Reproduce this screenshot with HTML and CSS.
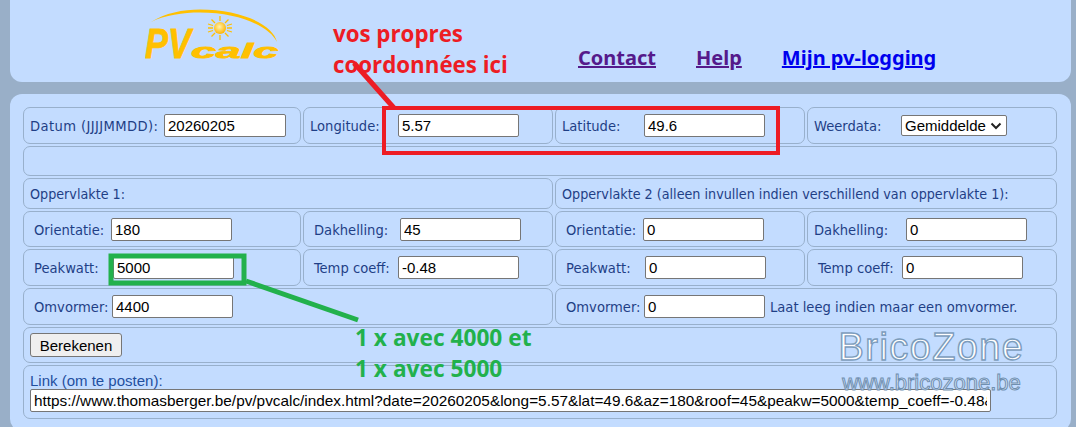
FILE: index.html
```html
<!DOCTYPE html>
<html lang="nl">

<head>
    <meta charset="UTF-8">
    <title>PVcalc</title>
    <link rel="stylesheet" href="styles.css">
</head>

<body>
    <header class="top-panel">
        <svg class="logo" width="140" height="60" viewBox="0 0 140 60">
            <defs>
                <radialGradient id="sun-fill" cx="0.45" cy="0.4" r="0.6">
                    <stop offset="0" stop-color="#fff3b0" />
                    <stop offset="1" stop-color="#ffb400" />
                </radialGradient>
            </defs>
            <path d="M6 13 C20 4 38 0.5 55 0.5 C95 0.5 128 15 132 33 C125 18 95 3.5 55 3.5 C38 3.5 20 6 6 13 Z" fill="#ffc000" />
            <g stroke="#ffc000" stroke-width="1.3">
                <path d="M75 7 L75 12 M75 26 L75 31 M63 19 L68 19 M82 19 L87 19" />
                <path d="M66.5 10.5 L70 14 M80 24 L83.5 27.5 M66.5 27.5 L70 24 M80 14 L83.5 10.5" />
                <path d="M63 15 L68 16.5 M82 21.5 L87 23 M63 23 L68 21.5 M82 16.5 L87 15" />
            </g>
            <circle cx="75" cy="19" r="6" fill="url(#sun-fill)" />
            <text class="logo-text" x="0" y="49"><tspan class="logo-pv" textLength="46" lengthAdjust="spacingAndGlyphs">PV</tspan><tspan class="logo-calc" textLength="87" lengthAdjust="spacingAndGlyphs">calc</tspan></text>
        </svg>
        <nav class="top-links">
            <a class="visited" href="#">Contact</a>
            <a class="visited" href="#">Help</a>
            <a href="#">Mijn pv-logging</a>
        </nav>
    </header>

    <main class="main-panel">
        <form class="calc-grid">
            <div class="cell first"><label class="w134 date-label">Datum (JJJJMMDD):</label><input class="field wide" value="20260205"></div>
            <div class="cell"><label class="w88">Longitude:</label><input class="field" value="5.57"></div>
            <div class="cell"><label class="w82">Latitude:</label><input class="field" value="49.6"></div>
            <div class="cell">
                <label class="w87">Weerdata:</label>
                <select class="weather">
                    <option>Gemiddelde</option>
                </select>
            </div>

            <div class="cell span-4"></div>

            <div class="cell first span-2 heading">Oppervlakte 1:</div>
            <div class="cell span-2 heading">Oppervlakte 2 (alleen invullen indien verschillend van oppervlakte 1):</div>

            <div class="cell inner"><label class="w77">Orientatie:</label><input class="field" value="180"></div>
            <div class="cell inner"><label class="w86">Dakhelling:</label><input class="field" value="45"></div>
            <div class="cell inner"><label class="w77">Orientatie:</label><input class="field" value="0"></div>
            <div class="cell"><label class="w92">Dakhelling:</label><input class="field" value="0"></div>

            <div class="cell inner"><label class="w79">Peakwatt:</label><input class="field" value="5000"></div>
            <div class="cell inner"><label class="w84">Temp coeff:</label><input class="field" value="-0.48"></div>
            <div class="cell inner"><label class="w79">Peakwatt:</label><input class="field" value="0"></div>
            <div class="cell inner"><label class="w84">Temp coeff:</label><input class="field" value="0"></div>

            <div class="cell inner span-2"><label class="w78">Omvormer:</label><input class="field" value="4400"></div>
            <div class="cell inner span-2">
                <label class="w78">Omvormer:</label><input class="field" value="0">
                <span class="hint">Laat leeg indien maar een omvormer.</span>
            </div>

            <div class="cell first span-4"><button class="calc-button" type="button">Berekenen</button></div>

            <div class="cell first span-4 link-cell">
                <label class="link-label">Link (om te posten):</label>
                <input class="field link-field" value="https://www.thomasberger.be/pv/pvcalc/index.html?date=20260205&amp;long=5.57&amp;lat=49.6&amp;az=180&amp;roof=45&amp;peakw=5000&amp;temp_coeff=-0.48&amp;inverter=4400">
            </div>
        </form>
    </main>

    <!-- annotations drawn on top of the screenshot -->
    <svg class="marks" width="1076" height="427" viewBox="0 0 1076 427">
        <g fill="none" stroke="#ed1c24" stroke-width="4">
            <rect x="384" y="108" width="394" height="45" />
            <path d="M354 63 L394 108" stroke-width="5" />
        </g>
        <g fill="none" stroke="#22b14c" stroke-width="5">
            <rect x="111" y="256" width="133" height="27" />
            <path d="M246 281 L358 320" />
        </g>
    </svg>
    <p class="note note-red">vos propres<br>coordonnées ici</p>
    <p class="note note-green">1 x avec 4000 et<br>1 x avec 5000</p>
    <div class="watermark">
        <div class="wm-name">BricoZone</div>
        <div class="wm-url">www.bricozone.be</div>
    </div>
</body>

</html>
```

FILE: styles.css
```css
html {
    height: 100%;
}

body {
    margin: 0;
    height: 427px;
    padding: 0 5px 0 10px;
    overflow: hidden;
    position: relative;
    box-sizing: border-box;
    background-color: #99afc8;
    color: #1f3f86;
    font-family: 'DejaVu Sans Condensed', 'DejaVu Sans', sans-serif;
    font-stretch: condensed;
    font-size: 14.6px;
}

.top-panel {
    height: 82px;
    display: flex;
    padding-left: 135px;
    box-sizing: border-box;
    background-color: #c3dcff;
    border-radius: 0 0 12px 12px;
}

.logo {
    margin-top: 9px;
    flex: none;
}

.logo-text {
    font-family: 'Liberation Sans', sans-serif;
    font-stretch: normal;
    font-weight: bold;
    font-style: italic;
    fill: #ffc000;
    stroke: #ffc000;
    stroke-width: 0.8px;
}

.logo-pv {
    font-size: 42px;
}

.logo-calc {
    font-size: 21px;
}

.top-links {
    display: flex;
    gap: 40px;
    margin-left: 293px;
    padding-top: 44px;
    font-family: 'Noto Sans', sans-serif;
    font-stretch: normal;
    font-size: 20px;
    font-weight: bold;
}

.top-links a {
    color: #0000ee;
}

.top-links a.visited {
    color: #551a8b;
}

.main-panel {
    margin-top: 12px;
    height: 337px;
    padding: 13px 0 0 13px;
    box-sizing: border-box;
    background-color: #c3dcff;
    border-radius: 12px;
}

.calc-grid {
    display: grid;
    grid-template-columns: 278px 250px 250px 250px;
    grid-template-rows: 37px 30px 31px 36px 37px 37px 36px 54px;
    gap: 2px;
}

.cell {
    display: flex;
    align-items: center;
    padding-left: 6px;
    border: 1px solid #98b0cc;
    border-radius: 7px;
    white-space: nowrap;
}

.cell.first {
    padding-left: 6px;
}

.cell.inner {
    padding-left: 10px;
}

.heading {
    font-size: 14.2px;
}

.date-label {
    letter-spacing: 0.4px;
}

.span-2 {
    grid-column: span 2;
}

.span-4 {
    grid-column: span 4;
}

.w77 { width: 77px; }
.w78 { width: 78px; }
.w79 { width: 79px; }
.w82 { width: 82px; }
.w84 { width: 84px; }
.w86 { width: 86px; }
.w87 { width: 87px; }
.w88 { width: 88px; }
.w92 { width: 92px; }
.w134 { width: 134px; }

.field {
    width: 121px;
    height: 23px;
    padding: 1px 3px;
    box-sizing: border-box;
    border: 1px solid #767676;
    border-radius: 2px;
    background-color: #fff;
    color: #000;
    font-family: 'Liberation Sans', sans-serif;
    font-size: 15px;
}

.field.wide {
    width: 122px;
}

.weather {
    appearance: none;
    width: 106px;
    height: 21px;
    padding: 0 0 0 3px;
    box-sizing: border-box;
    border: 1px solid #767676;
    border-radius: 2px;
    background: #fff url("data:image/svg+xml,%3Csvg xmlns='http://www.w3.org/2000/svg' width='12' height='8'%3E%3Cpath d='M1.5 1.5 L6 6 L10.5 1.5' fill='none' stroke='%23222' stroke-width='2'/%3E%3C/svg%3E") no-repeat right 4px center;
    color: #000;
    font-family: 'Liberation Sans', sans-serif;
    font-size: 15px;
}

.hint {
    margin-left: 5px;
}

.calc-button {
    width: 92px;
    height: 24px;
    padding: 0;
    border: 1px solid #767676;
    border-radius: 3px;
    background-color: #efefef;
    color: #000;
    font-family: 'Liberation Sans', sans-serif;
    font-size: 15px;
}

.link-cell {
    flex-direction: column;
    align-items: flex-start;
    justify-content: flex-end;
    padding-bottom: 6px;
}

.link-label {
    font-family: 'Liberation Sans', sans-serif;
    font-stretch: normal;
    font-size: 15px;
    line-height: 16px;
    color: #1f4fa0;
}

.link-field {
    width: 961px;
    font-size: 15.35px;
}

.marks {
    position: absolute;
    left: 0;
    top: 0;
    pointer-events: none;
}

.note {
    position: absolute;
    margin: 0;
    font-family: 'Open Sans', sans-serif;
    font-stretch: normal;
    font-weight: 700;
    font-size: 22.3px;
    line-height: 31px;
    white-space: nowrap;
}

.note-red {
    left: 333px;
    top: 18px;
    color: #ed1c24;
}

.note-green {
    left: 355px;
    top: 322px;
    font-size: 22.7px;
    color: #22b14c;
}

.watermark {
    position: absolute;
    left: 838px;
    top: 326px;
    width: 187px;
    font-family: 'Liberation Sans', sans-serif;
    font-stretch: normal;
    text-align: center;
    white-space: nowrap;
}

.wm-name {
    font-size: 38px;
    line-height: 42px;
    letter-spacing: 1.4px;
    color: #fff;
    -webkit-text-stroke: 1.4px #7c9cbc;
}

.wm-url {
    margin-top: 3px;
    font-size: 22px;
    line-height: 24px;
    color: #d5e3f5;
    -webkit-text-stroke: 1px #6f8fb0;
}
```
